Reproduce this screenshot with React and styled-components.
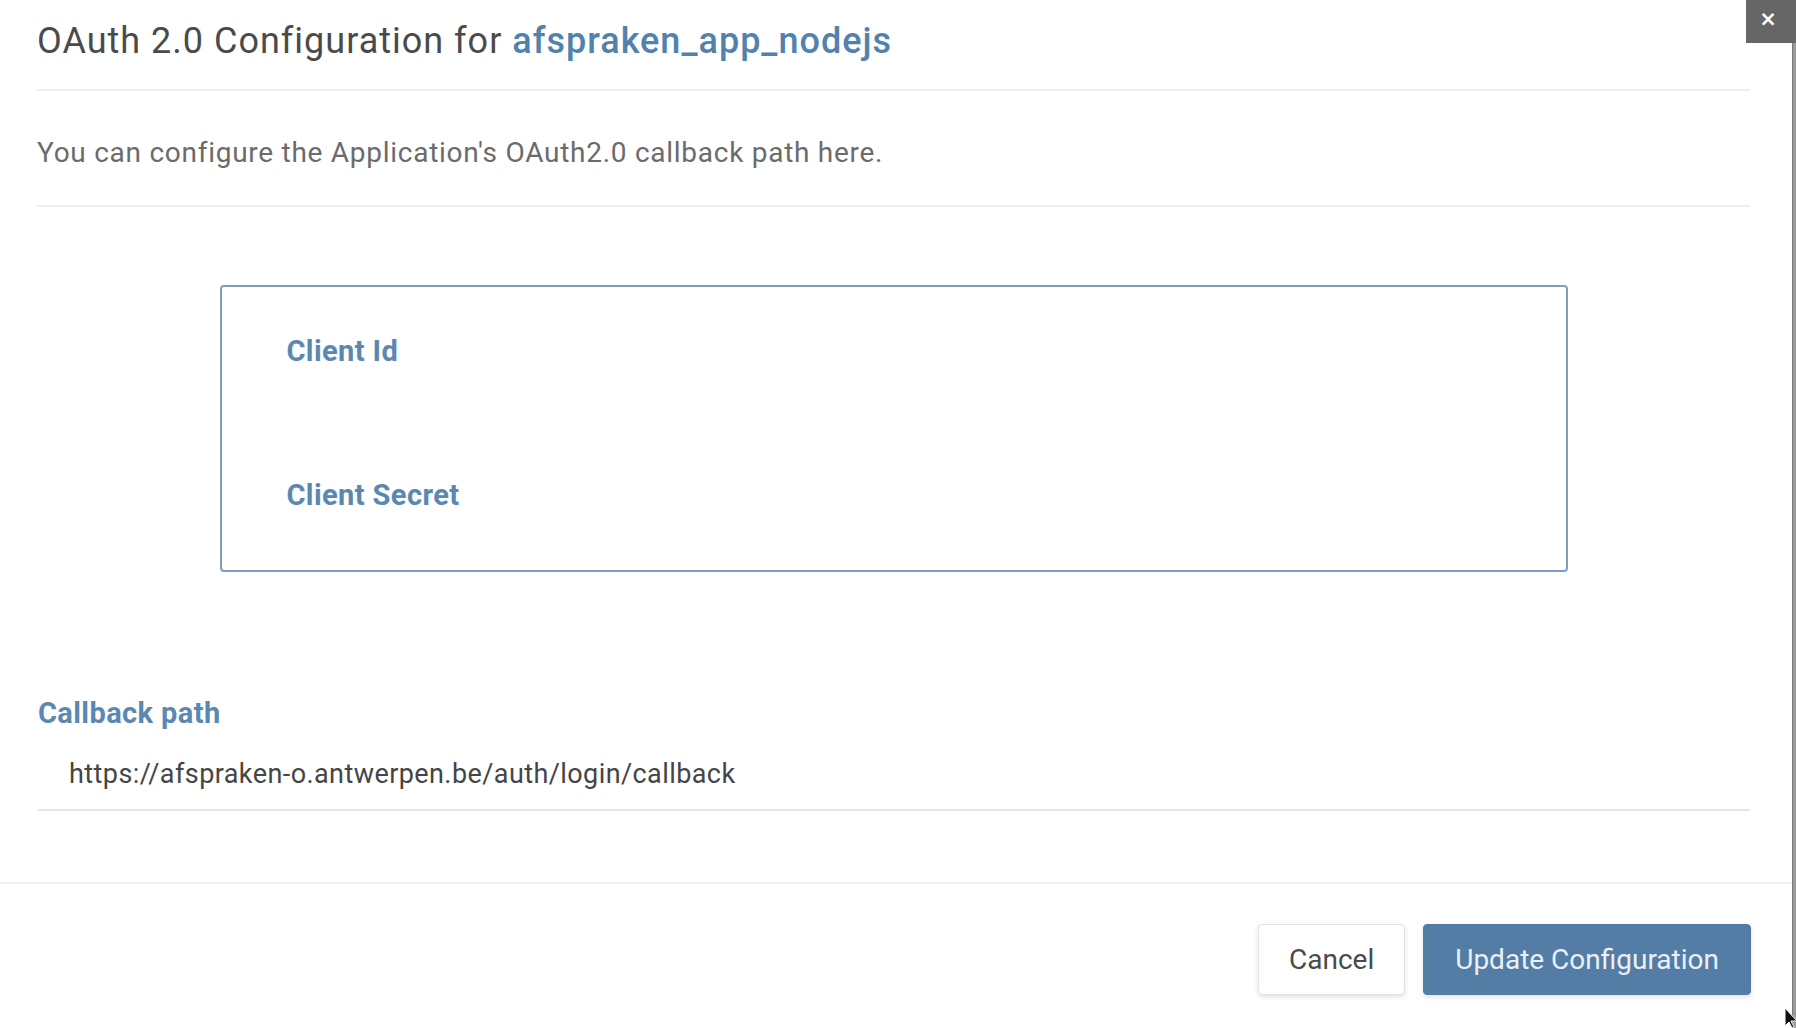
import React from "react";
import styled, { createGlobalStyle } from "styled-components";

const GlobalStyle = createGlobalStyle`
  html, body { margin: 0; padding: 0; background: #ffffff; }
  body { font-family: Roboto, "Noto Sans", Arial, sans-serif; overflow: hidden; }
  * { box-sizing: border-box; }
`;

const Screen = styled.div`
  position: relative;
  width: 1796px;
  height: 1028px;
  display: flex;
  background: #ffffff;
`;

const Modal = styled.div`
  flex: 1;
  display: flex;
  flex-direction: column;
  background: #ffffff;
`;

const ScrollEdge = styled.div`
  width: 4px;
  background: #9a9a9a;
  border-left: 1px solid #7a7a7a;
`;

const CloseButton = styled.button`
  position: absolute;
  top: 0;
  right: 0;
  width: 50px;
  height: 43px;
  border: none;
  background: #666666;
  color: #ffffff;
  font-family: "DejaVu Sans", sans-serif;
  font-size: 21px;
  font-weight: bold;
  padding: 0 6px 6px 0;
  display: flex;
  align-items: center;
  justify-content: center;
`;

const Content = styled.div`
  padding: 0 42px 71px 37px;
`;

const Title = styled.h1`
  margin: 0;
  padding: 16px 0 23px;
  font-size: 36px;
  line-height: 50px;
  font-weight: 400;
  color: #4a4a4a;
  border-bottom: 2px solid #efefef;
  letter-spacing: 1px;
`;

const AppName = styled.span`
  color: #5181ad;
  font-weight: 500;
`;

const Description = styled.p`
  margin: 0;
  padding: 42px 0 32px;
  font-size: 28px;
  line-height: 40px;
  letter-spacing: 0.73px;
  color: #6b6b6b;
  border-bottom: 2px solid #efefef;
`;

const CredentialsBox = styled.div`
  width: 1348px;
  margin: 78px auto 0;
  height: 287px;
  border: 2px solid #7d9ebe;
  border-radius: 4px;
  padding: 44px 65px 0;
  display: flex;
  flex-direction: column;
  gap: 104px;
`;

const FieldLabel = styled.div`
  font-size: 29px;
  line-height: 40px;
  font-weight: 700;
  letter-spacing: 0.4px;
  color: #5b88b3;
`;

const FormGroup = styled.div`
  margin-top: 121px;
  padding-left: 1px;
`;

const UrlInput = styled.input`
  display: block;
  width: 100%;
  margin-top: 10px;
  height: 68px;
  border: none;
  border-bottom: 2px solid #e4e4e4;
  outline: none;
  padding: 0 0 4px 31px;
  font-family: Roboto, "Noto Sans", Arial, sans-serif;
  font-size: 27px;
  letter-spacing: 0.42px;
  color: #454545;
  background: transparent;
`;

const Footer = styled.div`
  border-top: 2px solid #efefef;
  padding: 40px 41px 0 0;
  display: flex;
  justify-content: flex-end;
  align-items: center;
  gap: 18px;
`;

const Button = styled.button`
  height: 71px;
  padding: 0 ${(p) => (p.$primary ? 31 : 30)}px;
  border-radius: 4px;
  font-family: Roboto, "Noto Sans", Arial, sans-serif;
  font-size: 28px;
  font-weight: 400;
  cursor: pointer;
  border: 1px solid ${(p) => (p.$primary ? "#527ca4" : "#e2e2e2")};
  background: ${(p) => (p.$primary ? "#537da5" : "#ffffff")};
  color: ${(p) => (p.$primary ? "#e9f0f6" : "#4a4a4a")};
  box-shadow: 0 2px 5px rgba(0, 0, 0, 0.12);
`;

const Cursor = styled.svg`
  position: absolute;
  left: 1784px;
  top: 1007px;
`;

export default function App() {
  return (
    <>
      <GlobalStyle />
      <Screen>
        <Modal>
          <Content>
            <Title>
              OAuth 2.0 Configuration for <AppName>afspraken_app_nodejs</AppName>
            </Title>
            <Description>
              You can configure the Application's OAuth2.0 callback path here.
            </Description>
            <CredentialsBox>
              <FieldLabel>Client Id</FieldLabel>
              <FieldLabel>Client Secret</FieldLabel>
            </CredentialsBox>
            <FormGroup>
              <FieldLabel>Callback path</FieldLabel>
              <UrlInput
                readOnly
                defaultValue="https://afspraken-o.antwerpen.be/auth/login/callback"
              />
            </FormGroup>
          </Content>
          <Footer>
            <Button>Cancel</Button>
            <Button $primary>Update Configuration</Button>
          </Footer>
        </Modal>
        <ScrollEdge />
        <CloseButton aria-label="Close">×</CloseButton>
        <Cursor width="14" height="22" viewBox="0 0 14 22">
          <path d="M1 1 L1 19 L5 15 L8 21 L10 20 L7 14 L13 14 Z" fill="#111" stroke="#fff" strokeWidth="1" />
        </Cursor>
      </Screen>
    </>
  );
}
